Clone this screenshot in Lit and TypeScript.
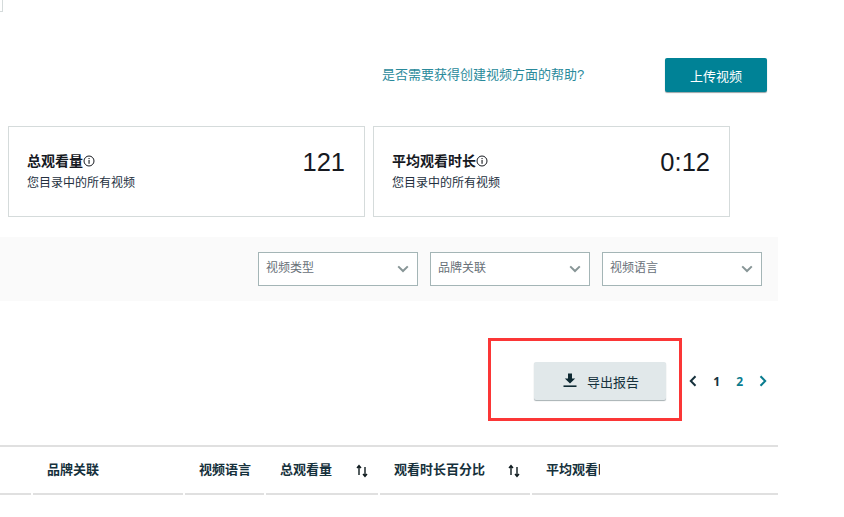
import { LitElement, html, css } from "lit";
import { customElement } from "lit/decorators.js";

const info = html`<svg class="info" viewBox="0 0 12 12" width="12" height="12" aria-hidden="true">
  <circle cx="6" cy="6" r="5" fill="none" stroke="#16191f" stroke-width="1"></circle>
  <rect x="5.5" y="5" width="1.1" height="3.8" fill="#16191f"></rect>
  <rect x="5.5" y="3" width="1.1" height="1.1" fill="#16191f"></rect>
</svg>`;

const chevronDown = html`<svg class="chev" viewBox="0 0 12 8" width="12" height="8" aria-hidden="true">
  <path d="M1.2 1.4 6 6 10.8 1.4" fill="none" stroke="#879596" stroke-width="2"></path>
</svg>`;

const sort = html`<svg class="sort" viewBox="0 0 12 14" width="12" height="14" aria-hidden="true">
  <path d="M3 11V2M1 4 3 1.6 5 4" fill="none" stroke="#0f1b1f" stroke-width="1.4"></path>
  <path d="M9 3v9M7 10l2 2.4L11 10" fill="none" stroke="#0f1b1f" stroke-width="1.4"></path>
</svg>`;

@customElement("app-root")
export class AppRoot extends LitElement {
  static styles = css`
    :host {
      display: block;
      width: 844px;
      height: 517px;
      overflow: hidden;
      background: #fff;
      font-family: "Liberation Sans", "Noto Sans CJK SC", sans-serif;
      color: #16191f;
    }
    .page { width: 778px; }
    .tab {
      width: 3px;
      height: 12px;
      box-sizing: border-box;
      border-right: 1px solid #d5dbdb;
      border-bottom: 1px solid #d5dbdb;
    }
    .help {
      display: flex;
      align-items: center;
      justify-content: flex-end;
      gap: 80px;
      margin-top: 46px;
      padding-right: 11px;
    }
    .help-link { font-size: 13px; color: #2a8a9b; line-height: 34px; width: 203px; white-space: nowrap; }
    .upload {
      width: 102px;
      height: 34px;
      display: flex;
      align-items: center;
      justify-content: center;
      background: #008296;
      color: #fff;
      font-size: 13px;
      border-radius: 2px;
      box-shadow: 0 1px 1px rgba(0, 28, 36, 0.4);
    }
    .cards { display: flex; gap: 8px; margin-top: 34px; padding-left: 8px; }
    .card {
      width: 357px;
      height: 91px;
      box-sizing: border-box;
      border: 1px solid #d5dbdb;
      padding: 0 19px 0 18px;
      display: flex;
      justify-content: space-between;
      align-items: flex-start;
    }
    .card-title { display: flex; align-items: center; margin-top: 24px; font-size: 14px; font-weight: 700; line-height: 20px; }
    .card-sub { font-size: 12px; line-height: 18px; margin-top: 3px; color: #232f3e; }
    .card-value { font-size: 25.5px; line-height: 30px; margin-top: 20px; color: #16191f; }
    .info { flex: none; }
    .filters {
      margin-top: 20px;
      height: 64px;
      box-sizing: border-box;
      background: #fafafa;
      display: flex;
      justify-content: flex-end;
      align-items: center;
      gap: 12px;
      padding-right: 16px;
    }
    .select {
      width: 160px;
      height: 34px;
      box-sizing: border-box;
      border: 1px solid #a4b5b6;
      background: #fff;
      display: flex;
      align-items: center;
      justify-content: space-between;
      padding: 0 8px 5px 7px;
      font-size: 12px;
      color: #687078;
    }
    .select .chev { margin-top: 5px; }
    .toolbar {
      height: 144px;
      display: flex;
      justify-content: flex-end;
      align-items: flex-start;
      padding: 61px 3px 0 0;
      box-sizing: border-box;
    }
    .export-wrap { position: relative; margin-right: 15px; }
    .export-mark {
      position: absolute;
      left: -46px;
      top: -24px;
      width: 194px;
      height: 83px;
      box-sizing: border-box;
      border: 3px solid #fb3636;
      pointer-events: none;
    }
    .export {
      width: 132px;
      height: 38px;
      box-sizing: border-box;
      background: #e1e8ea;
      border-radius: 2px;
      box-shadow: 0 1px 1px rgba(0, 28, 36, 0.35);
      display: flex;
      align-items: center;
      padding-left: 28px;
      gap: 9px;
      font-size: 13px;
      color: #16313c;
    }
    .export svg { margin-top: -3px; }
    .pager {
      display: flex;
      align-items: center;
      height: 38px;
      font-family: "Open Sans", sans-serif;
      font-size: 12px;
      font-weight: 700;
    }
    .pager span { width: 23.5px; text-align: center; }
    .pager .cur { color: #16313c; padding-left: 1px; box-sizing: border-box; }
    .pager .other { color: #0a7c8f; }
    .pager svg { display: block; margin: 0 auto; }
    .table {
      border-top: 2px solid #e0e0e0;
      display: grid;
      grid-template-columns: 31px 150px 79px 112px 150px 1fr;
      column-gap: 2px;
      height: 50px;
      box-sizing: border-box;
    }
    .th {
      border-bottom: 2px solid #e0e0e0;
      display: flex;
      align-items: center;
      justify-content: space-between;
      font-size: 13px;
      font-weight: 700;
      color: #16313c;
      padding: 0 10px 3px 14px;
      white-space: nowrap;
      overflow: hidden;
    }
    .th .sort { margin-top: 4px; }
    .th.clip { justify-content: flex-start; }
    .clip-text { width: 54px; overflow: hidden; }
    .th.tight { padding-right: 0; }
  `;

  private select(label: string) {
    return html`<div class="select"><span>${label}</span>${chevronDown}</div>`;
  }

  private card(title: string, value: string) {
    return html`<div class="card">
      <div>
        <div class="card-title">${title}${info}</div>
        <div class="card-sub">您目录中的所有视频</div>
      </div>
      <div class="card-value">${value}</div>
    </div>`;
  }

  render() {
    return html`<div class="page">
      <div class="tab"></div>
      <div class="help">
        <div class="help-link">是否需要获得创建视频方面的帮助?</div>
        <div class="upload">上传视频</div>
      </div>
      <div class="cards">
        ${this.card("总观看量", "121")}
        ${this.card("平均观看时长", "0:12")}
      </div>
      <div class="filters">
        ${this.select("视频类型")}
        ${this.select("品牌关联")}
        ${this.select("视频语言")}
      </div>
      <div class="toolbar">
        <div class="export-wrap">
          <div class="export">
            <svg viewBox="0 0 16 16" width="16" height="16" aria-hidden="true">
              <path d="M6 1.5h4v5h3.2L8 11.6 2.8 6.5H6z" fill="#0f2a33"></path>
              <rect x="1.5" y="13.4" width="13" height="1.6" fill="#0f2a33"></rect>
            </svg>
            <span>导出报告</span>
          </div>
          <div class="export-mark"></div>
        </div>
        <div class="pager">
          <span><svg viewBox="0 0 8 12" width="8" height="12"><path d="M6.5 1.2 1.8 6l4.7 4.8" fill="none" stroke="#16313c" stroke-width="2"></path></svg></span>
          <span class="cur">1</span>
          <span class="other">2</span>
          <span><svg viewBox="0 0 8 12" width="8" height="12"><path d="M1.5 1.2 6.2 6l-4.7 4.8" fill="none" stroke="#0a7c8f" stroke-width="2"></path></svg></span>
        </div>
      </div>
      <div class="table">
        <div class="th"></div>
        <div class="th">品牌关联</div>
        <div class="th tight">视频语言</div>
        <div class="th">总观看量${sort}</div>
        <div class="th">观看时长百分比${sort}</div>
        <div class="th clip"><span class="clip-text">平均观看时长</span></div>
      </div>
    </div>`;
  }
}
